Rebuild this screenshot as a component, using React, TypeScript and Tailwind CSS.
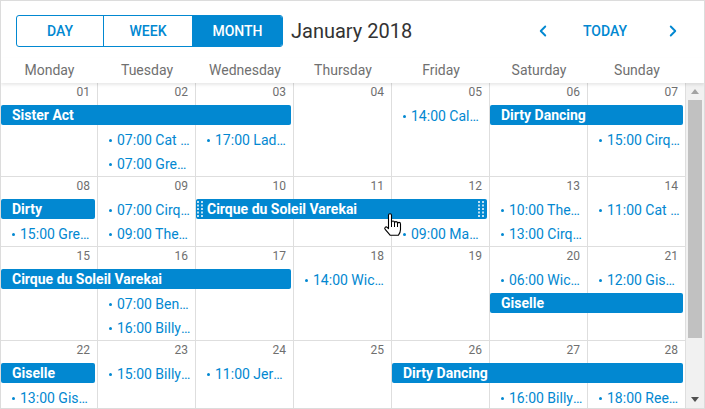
import { ChevronLeft, ChevronRight } from "lucide-react";

type Item =
  | { kind: "bar"; pos: string; title: string; grips?: boolean }
  | { kind: "ev"; pos: string; time: string; title: string };

const colStart = ["col-start-1", "col-start-2", "col-start-3", "col-start-4", "col-start-5", "col-start-6", "col-start-7"];

const weeks: { days: string[]; rows: string; items: Item[] }[] = [
  {
    days: ["01", "02", "03", "04", "05", "06", "07"],
    rows: "grid-rows-[21px_repeat(3,24px)]",
    items: [
      { kind: "bar", pos: "col-start-1 col-span-3 row-start-2", title: "Sister Act" },
      { kind: "bar", pos: "col-start-6 col-span-2 row-start-2", title: "Dirty Dancing" },
      { kind: "ev", pos: "col-start-2 row-start-3", time: "07:00", title: "Cat Stevens" },
      { kind: "ev", pos: "col-start-2 row-start-4", time: "07:00", title: "Grease" },
      { kind: "ev", pos: "col-start-3 row-start-3", time: "17:00", title: "Lady Gaga" },
      { kind: "ev", pos: "col-start-5 row-start-2", time: "14:00", title: "Calvin Harris" },
      { kind: "ev", pos: "col-start-7 row-start-3", time: "15:00", title: "Cirque du Soleil" },
    ],
  },
  {
    days: ["08", "09", "10", "11", "12", "13", "14"],
    rows: "grid-rows-[21px_repeat(2,24px)]",
    items: [
      { kind: "bar", pos: "col-start-1 col-span-1 row-start-2", title: "Dirty" },
      { kind: "ev", pos: "col-start-1 row-start-3", time: "15:00", title: "Grease" },
      { kind: "ev", pos: "col-start-2 row-start-2", time: "07:00", title: "Cirque du Soleil" },
      { kind: "ev", pos: "col-start-2 row-start-3", time: "09:00", title: "The Lion King" },
      { kind: "bar", pos: "col-start-3 col-span-3 row-start-2", title: "Cirque du Soleil Varekai", grips: true },
      { kind: "ev", pos: "col-start-5 row-start-3", time: "09:00", title: "Mamma Mia!" },
      { kind: "ev", pos: "col-start-6 row-start-2", time: "10:00", title: "The Lion King" },
      { kind: "ev", pos: "col-start-6 row-start-3", time: "13:00", title: "Cirque du Soleil" },
      { kind: "ev", pos: "col-start-7 row-start-2", time: "11:00", title: "Cat Stevens" },
    ],
  },
  {
    days: ["15", "16", "17", "18", "19", "20", "21"],
    rows: "grid-rows-[21px_repeat(3,24px)]",
    items: [
      { kind: "bar", pos: "col-start-1 col-span-3 row-start-2", title: "Cirque du Soleil Varekai" },
      { kind: "ev", pos: "col-start-2 row-start-3", time: "07:00", title: "Benny Andersson" },
      { kind: "ev", pos: "col-start-2 row-start-4", time: "16:00", title: "Billy Elliot" },
      { kind: "ev", pos: "col-start-4 row-start-2", time: "14:00", title: "Wicked" },
      { kind: "ev", pos: "col-start-6 row-start-2", time: "06:00", title: "Wicked" },
      { kind: "ev", pos: "col-start-7 row-start-2", time: "12:00", title: "Giselle" },
      { kind: "bar", pos: "col-start-6 col-span-2 row-start-3", title: "Giselle" },
    ],
  },
  {
    days: ["22", "23", "24", "25", "26", "27", "28"],
    rows: "grid-rows-[21px_repeat(3,24px)]",
    items: [
      { kind: "bar", pos: "col-start-1 col-span-1 row-start-2", title: "Giselle" },
      { kind: "ev", pos: "col-start-1 row-start-3", time: "13:00", title: "Giselle" },
      { kind: "ev", pos: "col-start-2 row-start-2", time: "15:00", title: "Billy Elliot" },
      { kind: "ev", pos: "col-start-3 row-start-2", time: "11:00", title: "Jersey Boys" },
      { kind: "bar", pos: "col-start-5 col-span-3 row-start-2", title: "Dirty Dancing" },
      { kind: "ev", pos: "col-start-6 row-start-3", time: "16:00", title: "Billy Elliot" },
      { kind: "ev", pos: "col-start-7 row-start-3", time: "18:00", title: "Reel Big Fish" },
    ],
  },
];

const dayNames = ["Monday", "Tuesday", "Wednesday", "Thursday", "Friday", "Saturday", "Sunday"];

function Grip() {
  return (
    <svg width="6" height="18" viewBox="0 0 6 18" className="shrink-0">
      <line x1="1" y1="1" x2="1" y2="18" stroke="white" strokeWidth="1.5" strokeDasharray="2 1.5" />
      <line x1="5" y1="1" x2="5" y2="18" stroke="white" strokeWidth="1.5" strokeDasharray="2 1.5" />
    </svg>
  );
}

function HandCursor() {
  return (
    <svg width="19" height="24" viewBox="0 0 19 24" className="absolute left-[382px] top-[212px]">
      <path
        d="M5.5 2.2a1.5 1.5 0 0 1 3 0V9.5a1.5 1.5 0 0 1 3 0v0.6a1.5 1.5 0 0 1 3 0v0.8a1.5 1.5 0 0 1 3 0V16.5q0 3.2-2.2 5.8H7.3L2.2 16.3a1.4 1.4 0 0 1 2-2l1.3 1.3Z"
        fill="white"
        stroke="black"
        strokeWidth="1.1"
        strokeLinejoin="round"
      />
      <path d="M8.5 9.5V14M11.5 10V14M14.5 10.8V14" stroke="black" strokeWidth="1" />
    </svg>
  );
}

export default function App() {
  return (
    <div className="relative w-[705px] h-[409px] overflow-hidden bg-white border border-[#dcdcdc] flex flex-col font-['Roboto',sans-serif]">
      {/* toolbar */}
      <div className="h-[57px] shrink-0 flex items-start pt-[14px] pl-[15px]">
        <div className="flex h-[32px] border border-[#0288d1] rounded-[3px] overflow-hidden text-[14px] font-medium">
          <div className="w-[87px] border-r border-[#0288d1] flex items-center justify-center text-[#0288d1]">DAY</div>
          <div className="w-[89px] border-r border-[#0288d1] flex items-center justify-center text-[#0288d1]">WEEK</div>
          <div className="w-[89px] bg-[#0288d1] flex items-center justify-center text-white">MONTH</div>
        </div>
        <div className="ml-[8px] h-[32px] flex items-center text-[20px] text-[#333]">January 2018</div>
        <div className="ml-auto mr-[13px] h-[32px] flex items-center text-[#0288d1]">
          <div className="w-[36px] flex justify-center">
            <ChevronLeft size={18} strokeWidth={2.5} />
          </div>
          <div className="w-[88px] text-center text-[14px] font-medium">TODAY</div>
          <div className="ml-[6px] w-[36px] flex justify-center">
            <ChevronRight size={18} strokeWidth={2.5} />
          </div>
        </div>
      </div>

      {/* day names */}
      <div className="relative z-10 h-[25px] shrink-0 flex bg-white shadow-[0_2px_3px_rgba(0,0,0,0.09)]">
        <div className="grid grid-cols-[97px_repeat(6,98px)]">
          {dayNames.map((d) => (
            <div key={d} className="text-center text-[14px] leading-[25px] text-[#707070]">{d}</div>
          ))}
        </div>
      </div>

      {/* body */}
      <div className="flex-1 min-h-0 flex">
        <div className="w-[685px] overflow-hidden">
          {weeks.map((w, wi) => (
            <div key={wi} className={`grid grid-cols-[97px_repeat(6,98px)] ${w.rows} border-b border-[#dedede]`}>
              {colStart.map((c, i) => (
                <div key={"b" + i} className={`${c} row-span-full border-r border-[#dedede]`} />
              ))}
              {w.days.map((d, i) => (
                <div key={"d" + i} className={`${colStart[i]} row-start-1 text-right pr-[8px] text-[12px] leading-[19px] text-[#6f6f6f]`}>
                  {d}
                </div>
              ))}
              {w.items.map((it, ii) =>
                it.kind === "bar" ? (
                  <div
                    key={ii}
                    className={`${it.pos} mt-[1px] mr-[3px] h-[20px] rounded-[2px] bg-[#0288d1] text-white text-[14px] font-bold leading-[20px] flex items-center overflow-hidden whitespace-nowrap ${it.grips ? "pl-[1px]" : "pl-[11px]"}`}
                  >
                    {it.grips && <Grip />}
                    <span className={it.grips ? "ml-[4px]" : ""}>{it.title}</span>
                    {it.grips && (
                      <span className="ml-auto mr-[3px] flex">
                        <Grip />
                      </span>
                    )}
                  </div>
                ) : (
                  <div key={ii} className={`${it.pos} min-w-0 flex items-center pl-[11px] pr-[5px] text-[14px] text-[#0288d1]`}>
                    <span className="w-[3px] h-[3px] rounded-full bg-[#0288d1] shrink-0 mr-[5px]" />
                    <span className="truncate">
                      {it.time} {it.title}
                    </span>
                  </div>
                )
              )}
            </div>
          ))}
        </div>
        {/* scrollbar */}
        <div className="w-[18px] bg-[#f1f1f1] flex flex-col">
          <div className="h-[17px] flex items-center justify-center">
            <svg width="8" height="5" viewBox="0 0 8 5">
              <path d="M0 5L4 0L8 5Z" fill="#a3a3a3" />
            </svg>
          </div>
          <div className="mx-[2px] h-[238px] bg-[#c1c1c1]" />
          <div className="mt-auto h-[17px] flex items-center justify-center">
            <svg width="8" height="5" viewBox="0 0 8 5">
              <path d="M0 0L8 0L4 5Z" fill="#505050" />
            </svg>
          </div>
        </div>
      </div>
      <HandCursor />
    </div>
  );
}
